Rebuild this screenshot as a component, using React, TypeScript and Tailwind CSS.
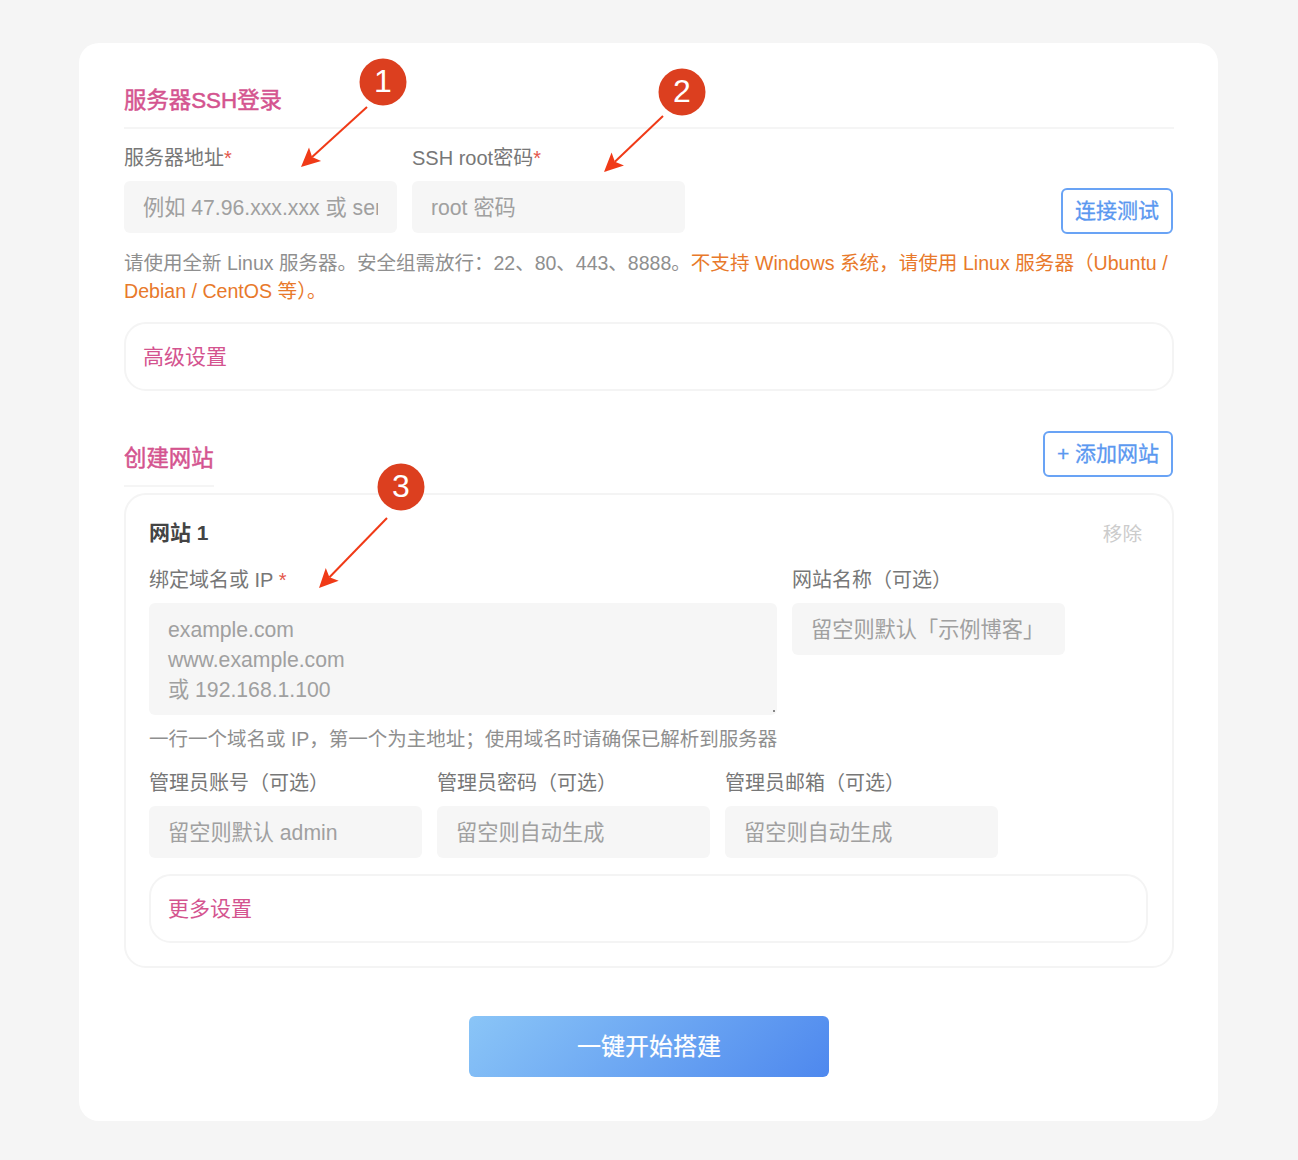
import React from 'react';

const FONT = "font-['Liberation_Sans','Noto_Sans_CJK_SC',sans-serif]";

const Field = ({ label, placeholder, star, className = 'w-[273px]' }: { label: string; placeholder: string; star?: string; className?: string }) => (
    <div className={`flex flex-col shrink-0 ${className}`}>
        <label className="h-[24px] leading-[24px] text-[20px] text-[#777] whitespace-nowrap">
            {label}
            {star && <span className="text-[#e4574c]">{star}</span>}
        </label>
        <input
            placeholder={placeholder}
            className="mt-[11px] h-[52px] w-full rounded-[6px] bg-[#f6f6f6] px-[19px] pt-[2px] text-[21.2px] outline-none placeholder:text-[#a0a0a0]"
        />
    </div>
);

const Fold = ({ text, className }: { text: string; className: string }) => (
    <div className={`flex h-[69px] items-center rounded-[22px] border-2 border-[#f4f4f4] px-[17px] text-[21px] text-[#d4548f] ${className}`}>{text}</div>
);

const Callout = ({ n, cx, cy, x1, y1, x2, y2 }: { n: number; cx: number; cy: number; x1: number; y1: number; x2: number; y2: number }) => {
    const a = Math.atan2(y2 - y1, x2 - x1);
    const px = Math.cos(a);
    const py = Math.sin(a);
    const bx = x2 - px * 19;
    const by = y2 - py * 19;
    const nx = x2 - px * 15;
    const ny = y2 - py * 15;
    return (
        <>
            <svg className="absolute left-0 top-0 pointer-events-none" width="1298" height="1160">
                <line x1={x1} y1={y1} x2={nx} y2={ny} stroke="#f03a17" strokeWidth="2" />
                <polygon
                    points={`${x2},${y2} ${bx - py * 9},${by + px * 9} ${nx},${ny} ${bx + py * 9},${by - px * 9}`}
                    fill="#f03a17"
                />
            </svg>
            <div
                className="absolute flex h-[47px] w-[47px] -translate-x-1/2 -translate-y-1/2 items-center justify-center rounded-full bg-[#dc3f1f] pb-[3px] text-[32px] text-white"
                style={{ left: cx, top: cy }}
            >
                {n}
            </div>
        </>
    );
};

export default function App() {
    return (
        <div className={`relative min-h-[1160px] overflow-hidden bg-[#f5f5f5] pt-[43px] ${FONT}`}>
            <div className="ml-[79px] mr-[80px] h-[1078px] rounded-[20px] bg-white pl-[45px] pr-[44px] pt-[42px]">
                <h2 className="h-[44px] border-b-2 border-[#f5f5f5] pt-[1px] text-[22.4px] leading-[30px] text-[#d4548f] [-webkit-text-stroke:0.5px_#d4548f]">服务器SSH登录</h2>

                <div className="mt-[17px] flex items-end gap-[15px]">
                    <Field label="服务器地址" star="*" placeholder="例如 47.96.xxx.xxx 或 server.example.com" />
                    <Field label="SSH root密码" star="*" placeholder="root 密码" />
                    <button className="ml-auto mr-[1px] -mb-[1px] h-[46px] w-[112px] rounded-[6px] border-2 border-[#69a3f5] text-[21px] text-[#5b98f0] [-webkit-text-stroke:0.3px_#5b98f0]">连接测试</button>
                </div>

                <p className="mt-[16px] text-[19.5px] leading-[28px] text-[#8f8f8f]">
                    请使用全新 Linux 服务器。安全组需放行：22、80、443、8888。
                    <span className="text-[19.6px] text-[#e8792b]">不支持 Windows 系统，请使用 Linux 服务器（Ubuntu / Debian / CentOS 等）。</span>
                </p>

                <Fold text="高级设置" className="mt-[17px]" />

                <div className="mt-[40px] flex items-start justify-between">
                    <h2 className="mt-[10px] h-[46px] border-b-2 border-[#f5f5f5] text-[22.4px] leading-[36px] text-[#d4548f] [-webkit-text-stroke:0.5px_#d4548f]">创建网站</h2>
                    <button className="mr-[1px] h-[46px] w-[130px] rounded-[6px] border-2 border-[#69a3f5] text-[21px] text-[#5b98f0] [-webkit-text-stroke:0.3px_#5b98f0]">+ 添加网站</button>
                </div>

                <div className="mt-[6px] h-[475px] rounded-[22px] border-2 border-[#f4f4f4] px-[23px] pt-[24px]">
                    <div className="flex h-[32px] items-center justify-between pr-[7px]">
                        <span className="pb-[4px] text-[21px] leading-[28px] font-bold text-[#444]">网站 1</span>
                        <span className="text-[19.6px] text-[#ccc]">移除</span>
                    </div>

                    <div className="mt-[17px] flex items-start gap-[15px]">
                        <div className="flex w-[628px] shrink-0 flex-col">
                            <label className="h-[24px] text-[20px] leading-[24px] text-[#777]">
                                绑定域名或 IP <span className="text-[#e4574c]">*</span>
                            </label>
                            <div className="relative mt-[11px] h-[112px]">
                                <textarea
                                    placeholder={'example.com\nwww.example.com\n或 192.168.1.100'}
                                    className="block h-full w-full resize-none rounded-[6px] bg-[#f6f6f6] px-[19px] pb-[10px] pt-[12px] text-[21.2px] leading-[30px] outline-none placeholder:text-[#a0a0a0]"
                                />
                                <span className="absolute bottom-[3px] right-[2px] h-[2px] w-[2px] bg-[#888]" />
                            </div>
                            <p className="mt-[10px] whitespace-nowrap text-[19.5px] leading-[28px] text-[#8f8f8f]">一行一个域名或 IP，第一个为主地址；使用域名时请确保已解析到服务器</p>
                        </div>
                        <Field label="网站名称（可选）" placeholder="留空则默认「示例博客」" />
                    </div>

                    <div className="mt-[18px] flex gap-[15px]">
                        <Field label="管理员账号（可选）" placeholder="留空则默认 admin" />
                        <Field label="管理员密码（可选）" placeholder="留空则自动生成" />
                        <Field label="管理员邮箱（可选）" placeholder="留空则自动生成" />
                    </div>

                    <Fold text="更多设置" className="mt-[16px] mr-[1px]" />
                </div>

                <button className="mx-auto mt-[48px] block h-[61px] w-[360px] rounded-[6px] bg-[linear-gradient(135deg,#8ac5f7,#4e88ee)] text-[24px] text-white [-webkit-text-stroke:0.2px_#fff]">一键开始搭建</button>
            </div>

            <Callout n={1} cx={383} cy={82} x1={367} y1={107} x2={301} y2={167} />
            <Callout n={2} cx={682} cy={92} x1={663} y1={116} x2={604} y2={172} />
            <Callout n={3} cx={401} cy={487} x1={387} y1={518} x2={319} y2={588} />
        </div>
    );
}
